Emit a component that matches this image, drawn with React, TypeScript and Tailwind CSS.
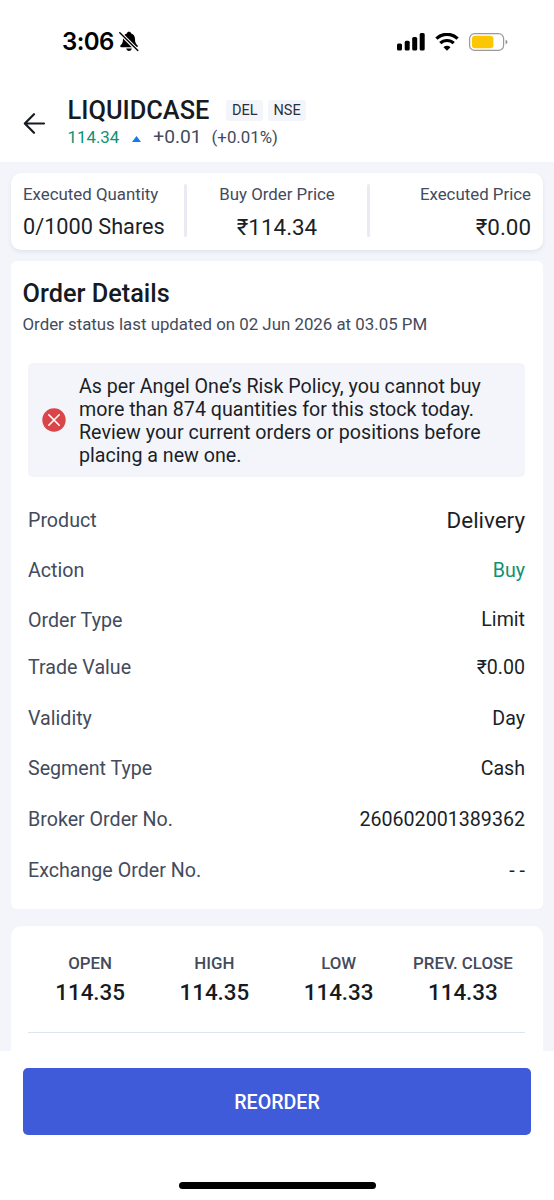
import { clsx } from 'clsx';

const details = [
  { label: 'Product', value: 'Delivery', row: 'h-[51px]', color: 'text-[#1b1f28] text-[22.4px]' },
  { label: 'Action', value: 'Buy', row: 'h-[50px]', color: 'text-[#0f9271] text-[19.6px]' },
  { label: 'Order Type', value: 'Limit', row: 'h-[49px]', color: 'text-[#1b1f28] text-[19.6px] -mt-[2px]' },
  { label: 'Trade Value', value: '₹0.00', row: 'h-[46px]', color: 'text-[#1b1f28] text-[19.6px]' },
  { label: 'Validity', value: 'Day', row: 'h-[55px]', color: 'text-[#1b1f28] text-[19.6px]' },
  { label: 'Segment Type', value: 'Cash', row: 'h-[45px]', color: 'text-[#1b1f28] text-[19.6px]' },
  { label: 'Broker Order No.', value: '260602001389362', row: 'h-[58px]', color: 'text-[#1b1f28] text-[19.650px]' },
  { label: 'Exchange Order No.', value: '- -', row: 'h-[44px]', color: 'text-[#1b1f28] text-[19.6px]' },
];

const prices = [
  { label: 'OPEN', value: '114.35' },
  { label: 'HIGH', value: '114.35' },
  { label: 'LOW', value: '114.33' },
  { label: 'PREV. CLOSE', value: '114.33' },
];

const MutedBell = () => (
  <svg className="ml-[5px] h-[21px] w-[20px]" viewBox="0 0 20 21" fill="none">
    <path
      d="M10 .8c-1.1 0-1.9.7-2.2 1.6C5.300 3.200 4 5.200 4 8c0 3.500-.9 4.800-2.400 6.300-.7.700-.5 2 .7 2h15.400c1.200 0 1.400-1.300.7-2C16.900 12.800 16 11.500 16 8c0-2.800-1.300-4.800-3.800-5.600C11.900 1.500 11.100.8 10 .8Z"
      fill="#000"
    />
    <path d="M7.200 17.600h5.600c-.3 1.400-1.400 2.300-2.800 2.300s-2.500-.9-2.800-2.300Z" fill="#000" />
    <path d="M.8 1.800 18.800 19.600" stroke="#fff" strokeWidth="3.600" />
    <path d="M.8 1.800 18.800 19.600" stroke="#000" strokeWidth="1.400" strokeLinecap="round" />
  </svg>
);

const StatusBar = () => (
  <div className="flex h-[82px] justify-between pl-[62px] pr-[46px] pt-[30px]">
    <div className="flex h-[23px] items-center">
      <span className="font-[Inter,sans-serif] text-[24px] font-semibold leading-[23px] tracking-[-0.6px] text-black">3:06</span>
      <MutedBell />
    </div>
    <div className="flex h-[23px] items-center">
      <svg className="h-[18px] w-[28px]" viewBox="0 0 28 18" fill="#000">
        <rect x="0" y="10.500" width="5" height="7" rx="1.500" />
        <rect x="7.700" y="7.700" width="5" height="9.800" rx="1.500" />
        <rect x="15.200" y="4" width="5" height="13.500" rx="1.500" />
        <rect x="22.700" y="0" width="5" height="17.500" rx="1.500" />
      </svg>
      <svg className="ml-[10px] h-[18px] w-[24px]" viewBox="0 0 24 18" fill="none" stroke="#000" strokeWidth="3.200">
        <path d="M1.400 5.600a15.200 15.200 0 0 1 21.200 0" />
        <path d="M5.300 10.200a9.600 9.600 0 0 1 13.400 0" />
        <path d="M12 17.700 8.500 14.200a5 5 0 0 1 7 0Z" fill="#000" stroke="none" />
      </svg>
      <svg className="ml-[10px] h-[18px] w-[39px]" viewBox="0 0 39 18" fill="none">
        <rect x=".6" y=".6" width="34" height="16.800" rx="5" stroke="#999" strokeWidth="1.200" />
        <rect x="2.900" y="2.700" width="21.500" height="12.500" rx="3.300" fill="#fcc601" />
        <path d="M36.600 6.700c1.200.5 1.800 1.300 1.800 2.300s-.6 1.800-1.800 2.300Z" fill="#8b8b8b" />
      </svg>
    </div>
  </div>
);

const Header = () => (
  <header className="flex h-[80px] items-start pl-[23px]">
    <svg className="mt-[30px] h-[23px] w-[23px]" viewBox="0 0 23 23" fill="none" stroke="#161a22" strokeWidth="2.200" strokeLinecap="round" strokeLinejoin="round">
      <path d="M21 11.500H2M11 2.200 1.800 11.500l9.200 9.300" />
    </svg>
    <div className="ml-[21.500px] pt-[14px]">
      <div className="flex items-center">
        <h1 className="text-[25.4px] font-medium leading-[28px] text-[#161a22]">LIQUIDCASE</h1>
        <span className="ml-[17px] h-[21px] rounded-[3px] bg-[#f4f5fb] px-[5.500px] text-[14.500px] leading-[21px] text-[#2a303c]">DEL</span>
        <span className="ml-[5px] h-[21px] rounded-[3px] bg-[#f4f5fb] px-[5.500px] text-[14.500px] leading-[21px] text-[#2a303c]">NSE</span>
      </div>
      <div className="mt-px flex items-center leading-[24px]">
        <span className="text-[16.850px] text-[#0f9271]">114.34</span>
        <svg className="ml-[13px] mt-[3px] h-[6px] w-[9px]" viewBox="0 0 9 6">
          <path d="M4.500 0 9 6H0Z" fill="#1479ee" />
        </svg>
        <span className="ml-[12px] text-[19.2px] text-[#434b5c]">+0.01</span>
        <span className="ml-[10px] text-[16.850px] text-[#434b5c]">(+0.01%)</span>
      </div>
    </div>
  </header>
);

const Summary = () => (
  <section className="mx-[11px] flex h-[77px] justify-between rounded-[10px] bg-white px-[12px] pt-[10px] shadow-[0_2px_4px_rgba(40,50,90,0.09)]">
    <div className="w-[161px]">
      <p className="text-[16.850px] leading-[22px] text-[#434b5c]">Executed Quantity</p>
      <p className="mt-[10px] text-[21.7px] leading-[24px] text-[#1b1f28]">0/1000 Shares</p>
    </div>
    <div className="mt-px h-[53px] w-[3px] rounded-full bg-[#e9eaf2]" />
    <div className="w-[179px] text-center">
      <p className="text-[16.850px] leading-[22px] text-[#434b5c]">Buy Order Price</p>
      <p className="mt-[10px] text-[22.4px] leading-[24px] text-[#1b1f28]">₹114.34</p>
    </div>
    <div className="mt-px h-[53px] w-[3px] rounded-full bg-[#e9eaf2]" />
    <div className="w-[161px] text-right">
      <p className="text-[16.850px] leading-[22px] text-[#434b5c]">Executed Price</p>
      <p className="mt-[10px] text-[22.4px] leading-[24px] text-[#1b1f28]">₹0.00</p>
    </div>
  </section>
);

const RiskNotice = () => (
  <div className="ml-[17px] mr-[18px] mt-[28px] flex h-[114px] items-center rounded-[5px] bg-[#f4f5fb] pl-[13.500px]">
    <svg className="size-[24px] shrink-0" viewBox="0 0 24 24">
      <circle cx="12" cy="12" r="11.700" fill="#da4549" />
      <path d="m6.800 6.800 10.400 10.400M17.200 6.800 6.800 17.200" stroke="#fff" strokeWidth="1.600" strokeLinecap="round" />
    </svg>
    <p className="ml-[13.500px] mt-px whitespace-nowrap text-[19.650px] leading-[23px] text-[#1b1f28]">
      As per Angel One’s Risk Policy, you cannot buy
      <br />
      more than 874 quantities for this stock today.
      <br />
      Review your current orders or positions before
      <br />
      placing a new one.
    </p>
  </div>
);

const OrderDetails = () => (
  <section className="mx-[11px] mt-[11px] h-[648px] rounded-[6px] bg-white pt-[18px]">
    <h2 className="ml-[11.500px] text-[25.3px] font-medium leading-[30px] text-[#161a22]">Order Details</h2>
    <p className="ml-[11.500px] mt-[4px] text-[16.850px] leading-[22px] text-[#434b5c]">
      Order status last updated on 02 Jun 2026 at 03.05 PM
    </p>
    <RiskNotice />
    <dl className="pl-[17px] pr-[18px] pt-[18px]">
      {details.map(({ label, value, row, color }) => (
        <div key={label} className={clsx('flex items-center justify-between', row)}>
          <dt className="text-[19.650px] text-[#434b5c]">{label}</dt>
          <dd className={color}>{value}</dd>
        </div>
      ))}
    </dl>
  </section>
);

const DayPrices = () => (
  <section className="mx-[11px] mt-[17px] h-[125px] rounded-t-[10px] bg-white pl-[17px] pr-[18px] pt-[26px]">
    <dl className="grid h-[81px] grid-cols-4 border-b border-[#dfe4f4] text-center">
      {prices.map(({ label, value }) => (
        <div key={label}>
          <dt className="whitespace-nowrap text-[16.850px] font-medium leading-[22px] text-[#434b5c]">{label}</dt>
          <dd className="mt-[5px] text-[22.4px] font-medium leading-[26px] text-[#161a22]">{value}</dd>
        </div>
      ))}
    </dl>
  </section>
);

const App = () => {
  return (
    <div className="flex h-[1200px] w-[554px] flex-col overflow-hidden bg-white font-[Roboto,sans-serif]">
      <StatusBar />
      <Header />
      <main className="h-[889px] overflow-hidden bg-[#f4f5fb] pt-[11px]">
        <Summary />
        <OrderDetails />
        <DayPrices />
      </main>
      <footer className="flex flex-1 flex-col items-center bg-white px-[23px] pt-[17px]">
        <button className="h-[67px] w-full rounded-[5px] bg-[#3f5bd9] pt-[2px] text-[19.6px] font-medium text-white">REORDER</button>
        <div className="mt-[47px] h-[7px] w-[197px] rounded-full bg-black" />
      </footer>
    </div>
  );
};

export default App;
